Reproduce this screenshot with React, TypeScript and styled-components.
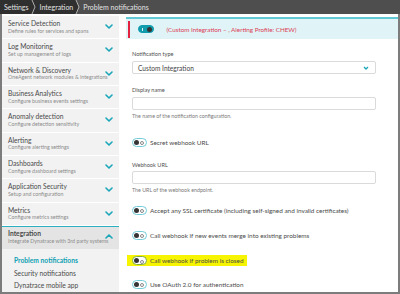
import React from 'react'
import styled, { createGlobalStyle } from 'styled-components'

const GlobalStyle = createGlobalStyle`
  html, body {
    margin: 0;
    padding: 0;
    background: #fff;
  }
  body {
    font-family: Lato, 'Open Sans', sans-serif;
    color: #454646;
  }
`

const Frame = styled.div`
  width: 400px;
  height: 294px;
  display: flex;
  flex-direction: column;
  overflow: hidden;
`

const Breadcrumbs = styled.nav`
  height: 14px;
  flex: none;
  display: flex;
  align-items: stretch;
  background: #4e4e4e;
  color: #e4e4e4;
  font-size: 7px;
`

const Crumb = styled.span<{ $current?: boolean }>`
  display: flex;
  align-items: center;
  padding: 0 2px 0 ${(p) => (p.$current ? '3px' : '4px')};
  background: ${(p) => (p.$current ? '#4e4e4e' : '#2f2f2f')};
  white-space: nowrap;
`

const Body = styled.div`
  flex: 1;
  display: flex;
  min-height: 0;
  border: 2px solid #7c7c7c;
  border-top: none;
`

const Sidebar = styled.aside`
  width: 117px;
  flex: none;
  margin-top: 2px;
  background: #f2f2f2;
  display: flex;
  flex-direction: column;
`

const NavItem = styled.div<{ $active?: boolean }>`
  height: 23.4px;
  box-sizing: border-box;
  padding: ${(p) => (p.$active ? '2px' : '3px')} 6px 0 6px;
  display: flex;
  justify-content: space-between;
  background: ${(p) => (p.$active ? '#e4e4e4' : 'transparent')};
  border-top: ${(p) => (p.$active ? '1px solid #2ab0c0' : 'none')};
  border-bottom: ${(p) => (p.$active ? 'none' : '1px solid #fff')};
`

const NavText = styled.div`
  display: flex;
  flex-direction: column;
  min-width: 0;
`

const NavTitle = styled.span<{ $active?: boolean }>`
  font-size: 6.7px;
  line-height: 8px;
  font-weight: ${(p) => (p.$active ? 700 : 400)};
  color: #4a4a4a;
  white-space: nowrap;
`

const NavSub = styled.span`
  font-size: 5.3px;
  line-height: 7px;
  margin-top: 0.5px;
  color: #8c8c8c;
  white-space: nowrap;
`

const Chevron = styled.svg`
  flex: none;
  margin-top: 5px;
`

const SubNav = styled.div`
  padding: 5px 0 0 12px;
  display: flex;
  flex-direction: column;
`

const SubLink = styled.span<{ $current?: boolean }>`
  font-size: 6.7px;
  line-height: 12.5px;
  font-weight: ${(p) => (p.$current ? 700 : 400)};
  color: ${(p) => (p.$current ? '#0e9fb2' : '#4a4a4a')};
  white-space: nowrap;
`

const Main = styled.main`
  flex: 1;
  min-width: 0;
  padding: 3px 0 0 7px;
  display: flex;
  flex-direction: column;
`

const Banner = styled.div`
  height: 22px;
  box-sizing: border-box;
  border-top: 2px solid #62c8d4;
  background: #e0f4f7;
  display: flex;
  align-items: center;
`

const AlertBar = styled.span`
  width: 2px;
  height: 17px;
  margin-left: 1.5px;
  background: #e2223f;
`

const AlertText = styled.span`
  margin-left: 13px;
  font-size: 6.3px;
  color: #dc3b55;
  white-space: nowrap;
`

const Form = styled.div`
  padding: 0 22px 0 6px;
  display: flex;
  flex-direction: column;
`

const Label = styled.span<{ $mt: number }>`
  margin-top: ${(p) => p.$mt}px;
  font-size: 5.6px;
  line-height: 8px;
  color: #505050;
`

const Help = styled.span`
  margin-top: 2px;
  font-size: 5.3px;
  line-height: 8px;
  color: #7a7a7a;
`

const Field = styled.div<{ $mt: number }>`
  margin-top: ${(p) => p.$mt}px;
  height: 13px;
  box-sizing: border-box;
  border: 1px solid #dadada;
  border-radius: 2px;
  background: #fff;
  display: flex;
  align-items: center;
  justify-content: space-between;
  padding: 0 6px 0 5px;
  font-size: 6.6px;
  color: #454545;
`

const ToggleRow = styled.div<{ $mt: number; $marked?: boolean }>`
  margin-top: ${(p) => p.$mt}px;
  height: ${(p) => (p.$marked ? '11px' : '10px')};
  display: flex;
  align-items: center;
  gap: 3px;
  align-self: flex-start;
  margin-left: ${(p) => (p.$marked ? '-5px' : '0')};
  padding: ${(p) => (p.$marked ? '0 4px 0 5px' : '0')};
  background: ${(p) => (p.$marked ? '#f6f400' : 'transparent')};
  font-size: 6.4px;
  color: #4a4a4a;
  white-space: nowrap;
`

const Switch = styled.span<{ $on?: boolean; $edge?: string }>`
  position: relative;
  flex: none;
  width: ${(p) => (p.$on ? '16px' : '15px')};
  height: ${(p) => (p.$on ? '8px' : '9px')};
  box-sizing: border-box;
  border-radius: 5px;
  border: 1px solid ${(p) => (p.$on ? '#119cae' : p.$edge ?? '#73ccd7')};
  background: ${(p) => (p.$on ? '#119cae' : '#fff')};

  &::before {
    content: '';
    position: absolute;
    top: ${(p) => (p.$on ? '0.5px' : '1px')};
    ${(p) => (p.$on ? 'right: 1px;' : 'left: 1px;')}
    width: 5px;
    height: 5px;
    border-radius: 50%;
    background: #353535;
  }

  &::after {
    content: '';
    position: absolute;
    top: ${(p) => (p.$on ? '2px' : '2.5px')};
    ${(p) => (p.$on ? 'left: 3.5px; width: 1px; height: 2.5px; background: #d8f2f5;' : 'right: 2px; width: 2px; height: 2px; border: 0.6px solid #888; border-radius: 50%;')}
  }
`

const BannerSwitch = styled(Switch)`
  margin-left: 8px;
`

const ArrowSep = ({ from, to }: { from: string; to: string }) => (
	<svg width='5' height='14' viewBox='0 0 5 14' style={{ flex: 'none', background: to }}>
		<polygon points='0,0 1,0 4,7 1,14 0,14' fill={from} />
		<polyline points='1,0 4,7 1,14' fill='none' stroke='#cfcfcf' strokeWidth='0.8' />
	</svg>
)

const NavChevron = ({ up }: { up?: boolean }) => (
	<Chevron width='8' height='5' viewBox='0 0 8 5'>
		<polyline
			points={up ? '1,4 4,1 7,4' : '1,1 4,4 7,1'}
			fill='none'
			stroke='#1aa6b8'
			strokeWidth='1.6'
			strokeLinecap='round'
			strokeLinejoin='round'
		/>
	</Chevron>
)

const navItems = [
	[ 'Service Detection', 'Define rules for services and spans' ],
	[ 'Log Monitoring', 'Set up management of logs' ],
	[ 'Network & Discovery', 'OneAgent network modules & integrations' ],
	[ 'Business Analytics', 'Configure business events settings' ],
	[ 'Anomaly detection', 'Configure detection sensitivity' ],
	[ 'Alerting', 'Configure alerting settings' ],
	[ 'Dashboards', 'Configure dashboard settings' ],
	[ 'Application Security', 'Setup and configuration' ],
	[ 'Metrics', 'Configure metrics settings' ]
]

const toggles: { text: string; mt: number; marked?: boolean }[] = [
	{ text: 'Accept any SSL certificate (including self-signed and invalid certificates)', mt: 11 },
	{ text: 'Call webhook if new events merge into existing problems', mt: 15 },
	{ text: 'Call webhook if problem is closed', mt: 15, marked: true },
	{ text: 'Use OAuth 2.0 for authentication', mt: 13 }
]

const App = (): React.ReactNode => (
	<>
		<GlobalStyle />
		<Frame>
			<Breadcrumbs>
				<Crumb>Settings</Crumb>
				<ArrowSep from='#2f2f2f' to='#2f2f2f' />
				<Crumb>Integration</Crumb>
				<ArrowSep from='#2f2f2f' to='#4e4e4e' />
				<Crumb $current>Problem notifications</Crumb>
			</Breadcrumbs>
			<Body>
				<Sidebar>
					{navItems.map(([ title, sub ]) => (
						<NavItem key={title}>
							<NavText>
								<NavTitle>{title}</NavTitle>
								<NavSub>{sub}</NavSub>
							</NavText>
							<NavChevron />
						</NavItem>
					))}
					<NavItem $active>
						<NavText>
							<NavTitle $active>Integration</NavTitle>
							<NavSub>Integrate Dynatrace with 3rd party systems</NavSub>
						</NavText>
						<NavChevron up />
					</NavItem>
					<SubNav>
						<SubLink $current>Problem notifications</SubLink>
						<SubLink>Security notifications</SubLink>
						<SubLink>Dynatrace mobile app</SubLink>
					</SubNav>
				</Sidebar>
				<Main>
					<Banner>
						<AlertBar />
						<BannerSwitch $on />
						<AlertText>(Custom Integration – , Alerting Profile: CHEW)</AlertText>
					</Banner>
					<Form>
						<Label $mt={11}>Notification type</Label>
						<Field $mt={3}>
							<span>Custom Integration</span>
							<svg width='6' height='4' viewBox='0 0 6 4'>
								<polyline points='1,1 3,3 5,1' fill='none' stroke='#1aa6b8' strokeWidth='1.3' />
							</svg>
						</Field>
						<Label $mt={12}>Display name</Label>
						<Field $mt={3} />
						<Help>The name of the notification configuration.</Help>
						<ToggleRow $mt={17}>
							<Switch />
							<span>Secret webhook URL</span>
						</ToggleRow>
						<Label $mt={14}>Webhook URL</Label>
						<Field $mt={2} />
						<Help>The URL of the webhook endpoint.</Help>
						{toggles.map((t) => (
							<ToggleRow key={t.text} $mt={t.mt} $marked={t.marked}>
								<Switch $edge={t.marked ? '#7fae3a' : undefined} />
								<span>{t.text}</span>
							</ToggleRow>
						))}
					</Form>
				</Main>
			</Body>
		</Frame>
	</>
)

export default App
